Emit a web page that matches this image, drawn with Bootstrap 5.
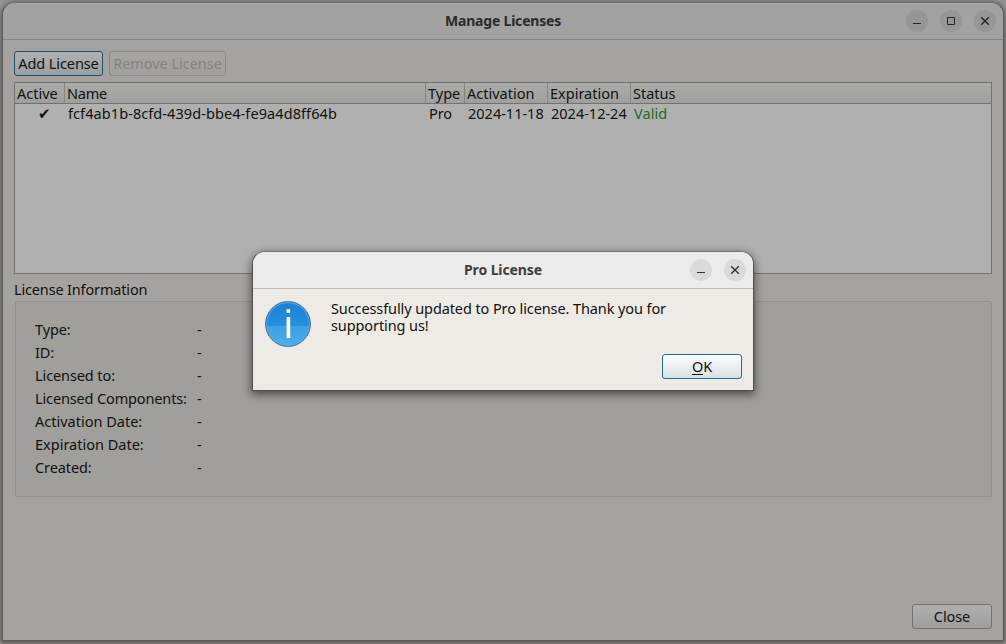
<!DOCTYPE html>
<html lang="en">
<head>
<meta charset="utf-8">
<meta name="viewport" content="width=device-width, initial-scale=1">
<title>Manage Licenses</title>
<link href="https://cdn.jsdelivr.net/npm/bootstrap@5.3.0/dist/css/bootstrap.min.css" rel="stylesheet">
<style>
body{width:1006px;height:644px;overflow:hidden;background:#96928f;font-family:"Noto Sans","Open Sans",sans-serif;font-size:14.5px;line-height:18px;color:#111;white-space:nowrap;letter-spacing:-.1px}
.win{width:1002px;height:639px;margin:2px 0 0 2px;border:1px solid #5c5c5b;border-top-color:#727272;border-radius:13px 13px 0 0;background:#a6a29f;box-shadow:0 1px 5px 1px rgba(0,0,0,.45)}
.win-body{padding:11px}
.toolbar{gap:6px;margin-bottom:6px}
.titlebar{height:37px;background:#a2a2a2;border-bottom:1px solid #858583;border-radius:12px 12px 0 0;font-weight:700;font-size:14px;color:#2b2b2b;padding-right:7px}
.win-title{letter-spacing:-.2px}
.controls{gap:12px}
.ctl{width:22px;height:22px;background:#969696;color:#262626}
.pbtn{--bs-btn-padding-x:0;--bs-btn-padding-y:0;--bs-btn-font-size:14.5px;--bs-btn-line-height:23px;width:80px;height:25px;border-radius:3px;border:1px solid #727270;background:linear-gradient(#afafae,#9e9e9e);color:#111!important;letter-spacing:inherit}
.pbtn.focused{width:89px;border-color:#1d5070;background:linear-gradient(#b0b1b1,#9a9fa2)}
.pbtn.off{width:117px;border-color:#8b8987;background:linear-gradient(#a8a6a5,#a2a09e);color:#848280!important;letter-spacing:-.04px}
.ltable{height:192px;border:1px solid #727271;background:#b0b0b0}
.lgrid{display:grid;grid-template-columns:50px 361px 39px 83px 83px 1fr}
.lhead{height:21px;border-bottom:1px solid #727271;background:linear-gradient(#ababa8,#9f9f9d);letter-spacing:0}
.lhead>div{border-right:1px solid #868684;padding:1px 0 0 2px}
.lhead>div:last-child{border:0}
.lhead>.tight{letter-spacing:-.25px}
.lrow>div{padding:0 0 0 3px}
.lrow>.tick{padding-left:23px}
.uuid{letter-spacing:.08px}
.day{letter-spacing:0}
.valid{color:#1d6b1d;letter-spacing:.05px}
.info-title{height:27px;padding-top:6px;letter-spacing:-.16px}
.info{height:196px;margin-left:1px;border:1px solid #92918e;border-radius:2px;background:#a09f9b;padding:15px 0 0 19px}
.info .d-flex{height:23px;align-items:center}
.key{width:162px}
.key.wide{letter-spacing:0}
.key.tight{letter-spacing:-.14px}
.dlg{position:absolute;left:252px;top:251px;width:502px;height:140px;border:1px solid #50504f;border-top-color:#747474;border-radius:13px 13px 0 0;background:#eeebe7;box-shadow:0 3px 9px 1px rgba(0,0,0,.5)}
.dlg-body{padding:12px 11px 11px 12px}
.msg{padding-left:20px;margin-top:-1px}
.msg>div{height:17px;line-height:17px}
.dlg .titlebar{background:#ebebeb;border-color:#bcbcba;color:#3d3d3d}
.dlg .ctl{background:#dadada;color:#333}
.dlg .pbtn{border-color:#216b99;background:linear-gradient(#fdfefe,#d8dfe3)}
.mnemonic{border-bottom:1px solid #111;line-height:16px;display:inline-block}
</style>
</head>
<body>
<main class="win d-flex flex-column">
  <header class="titlebar d-flex align-items-center position-relative flex-shrink-0">
    <div class="win-title w-100 text-center position-absolute start-0">Manage Licenses</div>
    <div class="controls d-flex ms-auto position-relative">
      <svg class="ctl rounded-circle" viewBox="0 0 22 22"><path d="M7 13.5h8" stroke="currentColor"/></svg>
      <svg class="ctl rounded-circle" viewBox="0 0 22 22"><path d="M7.5 7.5h7v7h-7z" fill="none" stroke="currentColor"/></svg>
      <svg class="ctl rounded-circle" viewBox="0 0 22 22"><path d="M7.2 7.2l7.6 7.6m0-7.6l-7.6 7.6" stroke="currentColor" stroke-width="1.4"/></svg>
    </div>
  </header>
  <div class="win-body d-flex flex-column flex-grow-1">
    <div class="toolbar d-flex">
      <button class="btn pbtn focused">Add License</button>
      <button class="btn pbtn off">Remove License</button>
    </div>
    <section class="ltable">
      <div class="lgrid lhead"><div>Active</div><div class="tight">Name</div><div>Type</div><div>Activation</div><div>Expiration</div><div>Status</div></div>
      <div class="lgrid lrow"><div class="tick">✔</div><div class="uuid">fcf4ab1b-8cfd-439d-bbe4-fe9a4d8ff64b</div><div>Pro</div><div class="day">2024-11-18</div><div class="day">2024-12-24</div><div class="valid">Valid</div></div>
    </section>
    <div class="info-title">License Information</div>
    <section class="info">
      <div class="d-flex"><div class="key">Type:</div>-</div>
      <div class="d-flex"><div class="key">ID:</div>-</div>
      <div class="d-flex"><div class="key">Licensed to:</div>-</div>
      <div class="d-flex"><div class="key tight">Licensed Components:</div>-</div>
      <div class="d-flex"><div class="key wide">Activation Date:</div>-</div>
      <div class="d-flex"><div class="key wide">Expiration Date:</div>-</div>
      <div class="d-flex"><div class="key">Created:</div>-</div>
    </section>
    <div class="d-flex justify-content-end mt-auto"><button class="btn pbtn">Close</button></div>
  </div>
</main>
<div class="dlg d-flex flex-column" role="dialog">
  <header class="titlebar d-flex align-items-center position-relative flex-shrink-0">
    <div class="w-100 text-center position-absolute start-0">Pro License</div>
    <div class="controls d-flex ms-auto position-relative">
      <svg class="ctl rounded-circle" viewBox="0 0 22 22"><path d="M7 13.5h8" stroke="currentColor"/></svg>
      <svg class="ctl rounded-circle" viewBox="0 0 22 22"><path d="M7.2 7.2l7.6 7.6m0-7.6l-7.6 7.6" stroke="currentColor" stroke-width="1.4"/></svg>
    </div>
  </header>
  <div class="dlg-body d-flex flex-column flex-grow-1">
    <div class="d-flex">
      <svg width="46" height="46" viewBox="0 0 46 46">
        <defs>
          <linearGradient id="disc" x1="0" y1="0" x2="0" y2="1"><stop offset="0" stop-color="#1a7fd6"/><stop offset=".54" stop-color="#2690de"/><stop offset=".55" stop-color="#409fe0"/><stop offset="1" stop-color="#4bafed"/></linearGradient>
          <linearGradient id="rim" x1="0" y1="0" x2="0" y2="1"><stop offset="0" stop-color="#5cb0ee"/><stop offset="1" stop-color="#5cb0ee" stop-opacity=".3"/></linearGradient>
        </defs>
        <circle cx="23" cy="23" r="22.4" fill="url(#disc)" stroke="#4c6880"/>
        <circle cx="23" cy="23" r="21.4" fill="none" stroke="url(#rim)"/>
        <path d="M21.6 8.2h3.6v3.8h-3.6zM21.6 16h3.6v21h-3.6z" fill="#fff"/>
      </svg>
      <div class="msg"><div>Successfully updated to Pro license. Thank you for</div><div>supporting us!</div></div>
    </div>
    <div class="d-flex justify-content-end mt-auto"><button class="btn pbtn"><span class="mnemonic">O</span>K</button></div>
  </div>
</div>
<script src="https://cdn.jsdelivr.net/npm/bootstrap@5.3.0/dist/js/bootstrap.bundle.min.js"></script>
</body>
</html>
